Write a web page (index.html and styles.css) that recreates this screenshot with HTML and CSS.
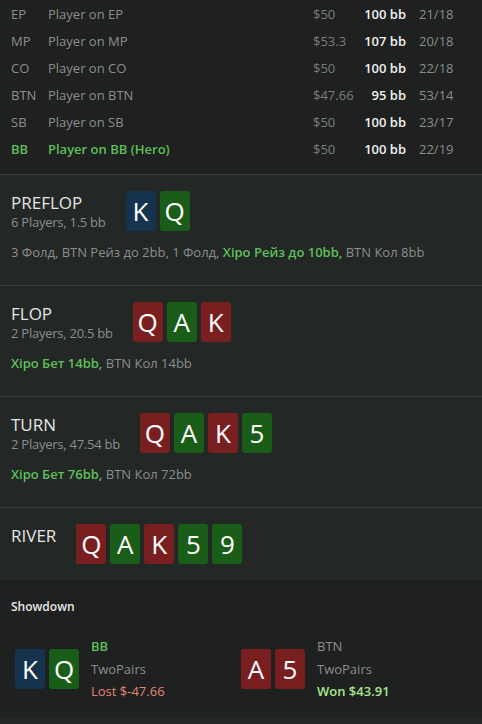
FILE: index.html
```html
<!DOCTYPE html>
<html lang="ru">
<head>
    <meta charset="UTF-8">
    <meta name="viewport" content="width=device-width, initial-scale=1.0">
    <title>Hand history</title>
    <link rel="stylesheet" href="styles.css">
</head>
<body>
    <div class="players">
        <div class="player-row"><span class="pos">EP</span><span class="name">Player on EP</span><span class="money">$50</span><span class="stack">100 bb</span><span class="stat">21/18</span></div>
        <div class="player-row"><span class="pos">MP</span><span class="name">Player on MP</span><span class="money">$53.3</span><span class="stack">107 bb</span><span class="stat">20/18</span></div>
        <div class="player-row"><span class="pos">CO</span><span class="name">Player on CO</span><span class="money">$50</span><span class="stack">100 bb</span><span class="stat">22/18</span></div>
        <div class="player-row"><span class="pos">BTN</span><span class="name">Player on BTN</span><span class="money">$47.66</span><span class="stack">95 bb</span><span class="stat">53/14</span></div>
        <div class="player-row"><span class="pos">SB</span><span class="name">Player on SB</span><span class="money">$50</span><span class="stack">100 bb</span><span class="stat">23/17</span></div>
        <div class="player-row hero"><span class="pos">BB</span><span class="name">Player on BB (Hero)</span><span class="money">$50</span><span class="stack">100 bb</span><span class="stat">22/19</span></div>
    </div>

    <div class="street">
        <div class="street-head">
            <div class="street-title">
                <div class="street-name">PREFLOP</div>
                <div class="street-info">6 Players, 1.5 bb</div>
            </div>
            <div class="cards">
                <span class="card blue">K</span>
                <span class="card green">Q</span>
            </div>
        </div>
        <p class="actions">3 Фолд, BTN Рейз до 2bb, 1 Фолд, <b>Хіро Рейз до 10bb,</b> BTN Кол 8bb</p>
    </div>

    <div class="street">
        <div class="street-head">
            <div class="street-title">
                <div class="street-name">FLOP</div>
                <div class="street-info">2 Players, 20.5 bb</div>
            </div>
            <div class="cards">
                <span class="card red">Q</span>
                <span class="card green">A</span>
                <span class="card red">K</span>
            </div>
        </div>
        <p class="actions"><b>Хіро Бет 14bb,</b> BTN Кол 14bb</p>
    </div>

    <div class="street">
        <div class="street-head">
            <div class="street-title">
                <div class="street-name">TURN</div>
                <div class="street-info">2 Players, 47.54 bb</div>
            </div>
            <div class="cards">
                <span class="card red">Q</span>
                <span class="card green">A</span>
                <span class="card red">K</span>
                <span class="card green">5</span>
            </div>
        </div>
        <p class="actions"><b>Хіро Бет 76bb,</b> BTN Кол 72bb</p>
    </div>

    <div class="street">
        <div class="street-head">
            <div class="street-title">
                <div class="street-name">RIVER</div>
            </div>
            <div class="cards">
                <span class="card red">Q</span>
                <span class="card green">A</span>
                <span class="card red">K</span>
                <span class="card green">5</span>
                <span class="card green">9</span>
            </div>
        </div>
    </div>

    <div class="showdown">
        <div class="showdown-title">Showdown</div>
        <div class="showdown-grid">
            <div class="hand">
                <div class="cards">
                    <span class="card blue">K</span>
                    <span class="card green">Q</span>
                </div>
                <div class="hand-info">
                    <div class="hand-pos hero">BB</div>
                    <div class="hand-combo">TwoPairs</div>
                    <div class="hand-result lost">Lost $-47.66</div>
                </div>
            </div>
            <div class="hand">
                <div class="cards">
                    <span class="card red">A</span>
                    <span class="card red">5</span>
                </div>
                <div class="hand-info">
                    <div class="hand-pos">BTN</div>
                    <div class="hand-combo">TwoPairs</div>
                    <div class="hand-result won">Won $43.91</div>
                </div>
            </div>
        </div>
    </div>
    <div class="footer-strip"></div>
</body>
</html>
```

FILE: styles.css
```css
:root {
    --bg: #1e211f;
    --panel: #232725;
    --line: #3b3e3c;
    --text: #e4e5e4;
    --muted: #8c8e8d;
    --hero: #5fbf5a;
    --card-blue: #15334f;
    --card-green: #1a5d18;
    --card-red: #7a1f1f;
}

* {
    box-sizing: border-box;
    margin: 0;
    padding: 0;
}

body {
    font-family: "Open Sans", "Noto Sans", sans-serif;
    font-size: 13px;
    background: var(--bg);
    color: var(--text);
}

.players {
    padding: 0 13px 12px 11px;
}

.player-row {
    display: grid;
    grid-template-columns: 37px 1fr 43px 50px 63px;
    align-items: center;
    height: 27px;
    color: var(--muted);
}

.player-row .money {
    color: #7c7e7d;
    white-space: nowrap;
}

.player-row .stack {
    color: #f0f0f0;
    font-weight: 600;
    text-align: right;
    white-space: nowrap;
}

.player-row .stat {
    padding-left: 13px;
}

.player-row.hero .pos,
.player-row.hero .name {
    color: var(--hero);
    font-weight: 600;
}

.street {
    background: var(--panel);
    border-top: 1px solid var(--line);
    padding: 16px 11px;
}

.street-head {
    display: flex;
    gap: 20px;
}

.street-name {
    font-size: 17px;
    line-height: 22px;
    margin-top: 1px;
}

.street-info {
    color: var(--muted);
    line-height: 17px;
    letter-spacing: -0.25px;
}

.cards {
    display: flex;
    gap: 4px;
}

.card {
    width: 30px;
    height: 40px;
    border-radius: 3px;
    color: #fff;
    font-size: 26px;
    line-height: 40px;
    text-align: center;
}

.card.blue { background: var(--card-blue); }
.card.green { background: var(--card-green); }
.card.red { background: var(--card-red); }

.actions {
    color: var(--muted);
    margin: 12px 0 8px;
    line-height: 18px;
}

.actions b {
    color: var(--hero);
    font-weight: 600;
}

.showdown {
    padding: 18px 15px 0 11px;
    height: 138px;
}

.showdown-title {
    font-size: 12px;
    font-weight: 600;
    color: #e8e8e8;
    margin-bottom: 20px;
}

.showdown-grid {
    display: grid;
    grid-template-columns: 1fr 1fr;
    padding-left: 4px;
}

.hand {
    display: flex;
    align-items: center;
    gap: 12px;
}

.hand-info {
    line-height: 22.5px;
    color: var(--muted);
}

.hand-pos.hero {
    color: var(--hero);
    font-weight: 600;
}

.hand-result.lost {
    color: #e88377;
}

.hand-result.won {
    color: #a7e68b;
    font-weight: 600;
}

.footer-strip {
    height: 8px;
    background: var(--panel);
}
```
